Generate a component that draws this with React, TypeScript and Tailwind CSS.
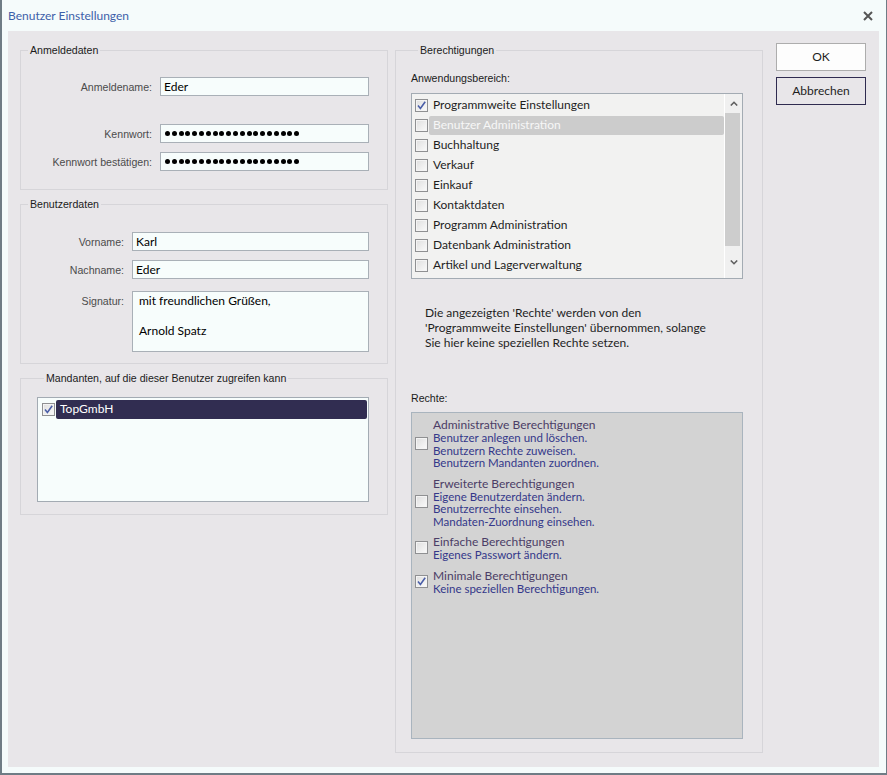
import React from 'react';

const ui = "font-['Lato','Noto_Sans',sans-serif]";
const lbl = "font-['Liberation_Sans',Arial,sans-serif] text-[10.6px] leading-[14px]";

const Check = ({ checked }: { checked?: boolean }) => (
  <div className="relative w-[13px] h-[13px] shrink-0 border border-[#8f9092] bg-gradient-to-br from-[#dedede] to-[#fbfbfb] shadow-[inset_0_0_0_1px_#f4f4f4]">
    {checked && (
      <svg viewBox="0 0 11 11" className="absolute inset-0 w-[11px] h-[11px]">
        <path d="M2 5.6 L4.4 8.4 L9.2 1.8" fill="none" stroke="#4a5ea8" strokeWidth="1.6" />
      </svg>
    )}
  </div>
);

const Group = ({ title, className, children }: { title: string; className?: string; children: React.ReactNode }) => (
  <fieldset className={`border border-[#d6d5d9] ${className ?? ''}`}>
    <legend className={`ml-[7px] px-[2px] text-[#1b1b1b] ${lbl}`}>{title}</legend>
    {children}
  </fieldset>
);

const Field = ({ value }: { value: string }) => (
  <div className={`h-[19px] border border-[#a9b0b7] bg-[#f7fdfc] px-[3px] flex items-center text-[12px] text-black ${ui}`}>{value}</div>
);

const Dots = () => (
  <div className="h-[19px] border border-[#a9b0b7] bg-[#f7fdfc] px-[4px] flex items-center gap-[1.8px]">
    {Array.from({ length: 20 }).map((_, i) => (
      <span key={i} className="w-[5px] h-[5px] rounded-full bg-black" />
    ))}
  </div>
);

const areas = [
  'Programmweite Einstellungen',
  'Benutzer Administration',
  'Buchhaltung',
  'Verkauf',
  'Einkauf',
  'Kontaktdaten',
  'Programm Administration',
  'Datenbank Administration',
  'Artikel und Lagerverwaltung',
];

const rights = [
  { title: 'Administrative Berechtigungen', lines: ['Benutzer anlegen und löschen.', 'Benutzern Rechte zuweisen.', 'Benutzern Mandanten zuordnen.'] },
  { title: 'Erweiterte Berechtigungen', lines: ['Eigene Benutzerdaten ändern.', 'Benutzerrechte einsehen.', 'Mandaten-Zuordnung einsehen.'] },
  { title: 'Einfache Berechtigungen', lines: ['Eigenes Passwort ändern.'] },
  { title: 'Minimale Berechtigungen', lines: ['Keine speziellen Berechtigungen.'], checked: true },
];

export default function App() {
  return (
    <div className="w-[887px] h-[775px] bg-[#f5fbfb] border-l-2 border-r border-b-2 border-[#6f7c85] flex flex-col">
      <div className="h-[31px] shrink-0 flex items-center justify-between pl-[6px] pr-[13px]">
        <span className={`text-[12px] text-[#3d5fa9] ${ui}`}>Benutzer Einstellungen</span>
        <svg viewBox="0 0 10 10" className="w-[10px] h-[10px]">
          <path d="M1 1 L9 9 M9 1 L1 9" stroke="#555555" strokeWidth="2" />
        </svg>
      </div>

      <div className="flex-1 mr-[7px] ml-[6px] mb-[6px] bg-[#e8e6e9] flex pt-[12px] pl-[12px] gap-[7px]">
        {/* left column */}
        <div className="w-[368px] flex flex-col">
          <Group title="Anmeldedaten" className="pt-[20px] pb-[18px] pr-[18px]">
            <div className="grid grid-cols-[131px_1fr] gap-x-[8px] items-center">
              <span className={`text-right text-[#4b4b4b] ${lbl}`}>Anmeldename:</span>
              <Field value="Eder" />
              <div className="col-span-2 h-[28px]" />
              <span className={`text-right text-[#4b4b4b] ${lbl}`}>Kennwort:</span>
              <Dots />
              <div className="col-span-2 h-[9px]" />
              <span className={`text-right text-[#4b4b4b] ${lbl}`}>Kennwort bestätigen:</span>
              <Dots />
            </div>
          </Group>

          <Group title="Benutzerdaten" className="mt-[7px] pt-[21px] pb-[11px] pr-[18px]">
            <div className="grid grid-cols-[103px_1fr] gap-x-[8px] items-center">
              <span className={`text-right text-[#4b4b4b] ${lbl}`}>Vorname:</span>
              <Field value="Karl" />
              <div className="col-span-2 h-[9px]" />
              <span className={`text-right text-[#4b4b4b] ${lbl}`}>Nachname:</span>
              <Field value="Eder" />
              <div className="col-span-2 h-[12px]" />
              <span className={`self-start pt-[3px] text-right text-[#4b4b4b] ${lbl}`}>Signatur:</span>
              <div className={`h-[61px] border border-[#a9b0b7] bg-[#f7fdfc] pl-[6px] pt-[1px] text-[12px] leading-[15px] text-black ${ui}`}>
                <div>mit freundlichen Grüßen,</div>
                <div>&nbsp;</div>
                <div>Arnold Spatz</div>
              </div>
            </div>
          </Group>

          <Group title="Mandanten, auf die dieser Benutzer zugreifen kann" className="mt-[7px] pt-[12px] pb-[12px] pl-[16px] pr-[18px]">
            <div className="h-[105px] border border-[#a3abb3] bg-[#f7fdfc] pt-[1px] px-[1px]">
              <div className="h-[20px] flex items-center pl-[3px]">
                <Check checked />
                <div className={`ml-[1px] flex-1 h-[19px] rounded-[2px] bg-[#312d51] text-white pl-[4px] flex items-center text-[12px] ${ui}`}>TopGmbH</div>
              </div>
            </div>
          </Group>
        </div>

        {/* right column */}
        <div className="w-[368px]">
          <Group title="Berechtigungen" className="pl-[15px] pr-[19px] pb-[13px]">
            <div className={`mt-[14px] text-[#1b1b1b] ${lbl}`}>Anwendungsbereich:</div>
            <div className="mt-[8px] h-[186px] border border-[#a3abb3] bg-[#f2f2f1] flex">
              <div className="flex-1 pt-[1px] pl-[3px]">
                {areas.map((a, i) => (
                  <div key={a} className="h-[20px] flex items-center">
                    <Check checked={i === 0} />
                    <div
                      className={`ml-[1px] flex-1 h-[19px] rounded-[2px] pl-[4px] flex items-center text-[12px] ${ui} ${
                        i === 1 ? 'bg-[#cccccc] text-[#f7f7f7]' : 'text-[#1e1e1e]'
                      }`}
                    >
                      {a}
                    </div>
                  </div>
                ))}
              </div>
              <div className="w-[18px] border-l border-white bg-[#f0f0f0] flex flex-col">
                <div className="h-[19px] flex items-center justify-center">
                  <svg viewBox="0 0 8 5" className="w-[8px] h-[5px]">
                    <path d="M0.8 4.5 L4 1.3 L7.2 4.5" fill="none" stroke="#606060" strokeWidth="1.6" />
                  </svg>
                </div>
                <div className="h-[133px] w-[15px] bg-[#cdcdcd]" />
                <div className="flex-1 flex items-center justify-center">
                  <svg viewBox="0 0 8 5" className="w-[8px] h-[5px]">
                    <path d="M0.8 0.5 L4 3.7 L7.2 0.5" fill="none" stroke="#606060" strokeWidth="1.6" />
                  </svg>
                </div>
              </div>
            </div>

            <div className={`mt-[26px] ml-[14px] text-[12px] leading-[15px] text-[#1e1e1e] ${ui}`}>
              <div>Die angezeigten 'Rechte' werden von den</div>
              <div>'Programmweite Einstellungen' übernommen, solange</div>
              <div>Sie hier keine speziellen Rechte setzen.</div>
            </div>

            <div className={`mt-[41px] text-[#1b1b1b] ${lbl}`}>Rechte:</div>
            <div className="mt-[7px] h-[327px] border border-[#a9b4be] bg-[#d3d3d3] pt-[4px] pl-[3px] flex flex-col gap-[6px]">
              {rights.map((r) => (
                <div key={r.title} className="flex items-center">
                  <Check checked={r.checked} />
                  <div className={`ml-[5px] ${ui}`}>
                    <div className="text-[12px] leading-[15px] text-[#4b3d66]">{r.title}</div>
                    {r.lines.map((l) => (
                      <div key={l} className="text-[11.5px] leading-[12.5px] text-[#34388a]">{l}</div>
                    ))}
                  </div>
                </div>
              ))}
            </div>
          </Group>
        </div>

        {/* buttons */}
        <div className="ml-[6px] flex flex-col gap-[6px]">
          <button className={`w-[90px] h-[28px] border border-[#adadad] bg-[#fdfdfd] text-[12px] text-[#1e1e1e] ${ui}`}>OK</button>
          <button className={`w-[90px] h-[28px] border border-[#2f2b50] bg-[#e8e6e9] text-[12px] text-[#1e1e1e] ${ui}`}>Abbrechen</button>
        </div>
      </div>
    </div>
  );
}
